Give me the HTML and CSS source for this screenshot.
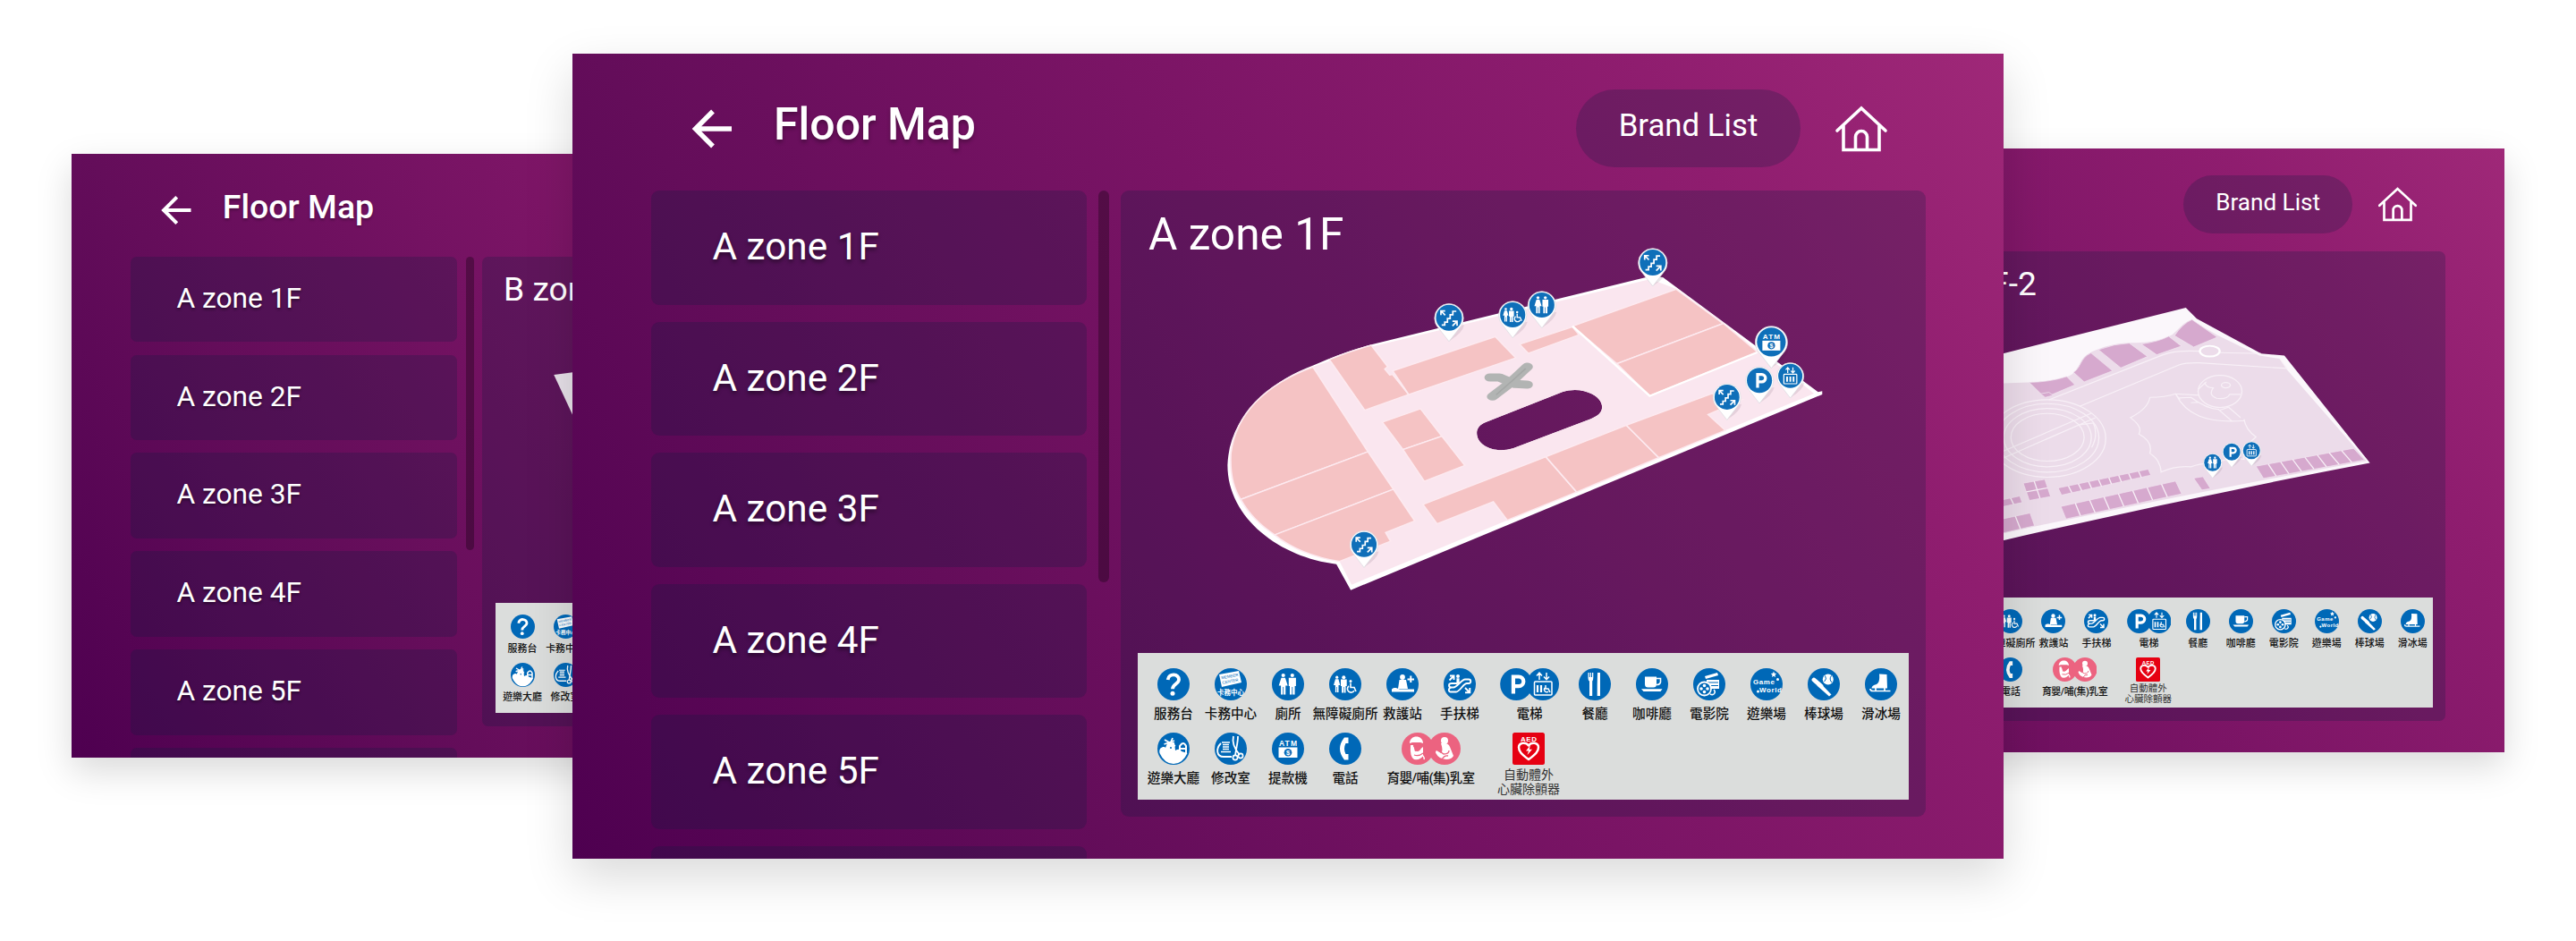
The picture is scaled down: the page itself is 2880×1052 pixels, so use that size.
FILE: index.html
```html
<!DOCTYPE html>
<html lang="zh-Hant">
<head>
	<meta charset="utf-8">
	<meta name="viewport" content="width=device-width,initial-scale=1">
	<title>Floor Map</title>
	<link rel="stylesheet" href="styles.css">
</head>
<body>
	<!-- shared icons, drawn around 0,0 with r=18 -->
	<svg class="defs" width="0" height="0">
		<defs>
			<symbol id="back" viewBox="0 0 48 48"><path d="M46 24H6M25 4.500L5.500 24L25 43.500" fill="none" stroke="#fff" stroke-width="5.400"/></symbol>
			<symbol id="home" viewBox="0 0 60 54"><path d="M3 29L30 4L57 29M10 23.500V50.500H50V23.500M23.500 50V36a6.500 6.500 0 0 1 13 0V50" fill="none" stroke="#fff" stroke-width="3.600" stroke-linecap="round"/></symbol>

			<g id="g-toilet" fill="#fff">
				<circle cx="-5.300" cy="-10" r="2.100"/><path d="M-7.500-7.300h4.400L-.3 1.500H-2.700V11.500H-4.900V3h-.8v8.500H-7.900V1.500H-10.300Z"/>
				<circle cx="4.800" cy="-10" r="2.100"/><path d="M.8-7.300H8.900V2H7.600V11.500H5.200V3H4.400v8.500H2V2H.8Z"/>
			</g>
			<g id="g-wheel" fill="#fff">
				<circle cx="-9.300" cy="-7.800" r="1.600"/><path d="M-11-5.700h3.400l1.900 6.600H-7.500V9h-1.500V3h-.6V9h-1.500V.900H-13Z"/>
				<circle cx="-1.700" cy="-7.800" r="2"/><path d="M-5-5.500H1.700V2H.5V9.500H-1.400V3h-.6V9.500H-3.900V2H-5Z"/>
				<circle cx="6" cy="-3.500" r="1.500"/><path d="M6-1.500V3.500h4l2 4.500M4 2A4 4 0 1 0 10 7" fill="none" stroke="#fff" stroke-width="1.600"/>
			</g>
			<g id="g-esc" fill="none" stroke="#fff" stroke-width="2">
				<path d="M-9.500 9.500H-5.500V5.500H-2V1H1.500V-4H5V-8.500H9.500"/><path d="M-5-3.500L-10-8.500M-10.500-3.500V-9h5.500M4.500 10.500L10 5M4.500 4.500H10.500V10.500"/>
			</g>
			<g id="g-p"><path d="M-4.600 10.500V-8.500H1.500a5.300 5.300 0 0 1 0 10.600H-4.600" fill="none" stroke="#fff" stroke-width="4.200"/></g>
			<g id="g-lift" fill="none" stroke="#fff" stroke-width="1.700">
				<rect x="-10" y="-2.500" width="20" height="14.500" rx="1"/><path d="M-4-4.500V-12.500M-7-9.500L-4-12.800L-1-9.500M4-13V-5M1-8L4-4.800L7-8"/>
				<path d="M-5 1V9M0 1V9M5 1V9" stroke-width="2.600"/>
			</g>
			<g id="g-atm">
				<text x="0" y="-3.500" class="ico-text" font-size="8.500" textLength="20">ATM</text>
				<rect x="-10.500" y="-1.500" width="21" height="11.500" fill="#fff"/><circle cx="0" cy="4.200" r="4.300" fill="#0b6bb8"/><text x="0" y="7" class="ico-text" font-size="7.500">$</text>
			</g>

			<symbol id="i-ask" viewBox="-18 -18 36 36"><circle r="18" fill="#0068b7"/><path d="M-6.300-5C-5.500-13 6.500-12 6-4.800C5.700-.5-1-.4-1 5.200" fill="none" stroke="#fff" stroke-width="3.800"/><circle cx="-1" cy="10.200" r="2.500" fill="#fff"/></symbol>
			<symbol id="i-card" viewBox="-18 -18 36 36"><circle r="18" fill="#0068b7"/><path d="M-13-11L9-15L12-2L-10 3Z" fill="#fff"/><g fill="#0068b7" font-family="Liberation Sans" font-size="4.400" transform="rotate(-11)"><text x="-9" y="-7.500">MEMBER</text><text x="-9" y="-2">CENTER</text></g><text x="0" y="11.500" class="ico-text" font-size="7.500" textLength="30">卡務中心</text></symbol>
			<symbol id="i-toilet" viewBox="-18 -18 36 36"><circle r="18" fill="#0068b7"/><use href="#g-toilet"/></symbol>
			<symbol id="i-wheel" viewBox="-18 -18 36 36"><circle r="18" fill="#0068b7"/><use href="#g-wheel"/></symbol>
			<symbol id="i-aid" viewBox="-18 -18 36 36"><circle r="18" fill="#0068b7"/><circle cx="0" cy="-8" r="2.900" fill="#fff"/><path d="M-3.500-5H4L6 5H-5ZM-12 5.500C-9 3-7 4-3 5.500H13V8.500H-12Z" fill="#fff"/><path d="M5.500-5.500H13M9.300-9.500V-2" stroke="#fff" stroke-width="2"/></symbol>
			<symbol id="i-esc" viewBox="-18 -18 36 36"><circle r="18" fill="#0068b7"/><g fill="none" stroke="#fff" stroke-width="1.900"><path d="M-3-1H-9C-13-1-13 3.500-9 3.500H-7C-3 3.500 2-5.500 6-5.500H10C13-5.500 13-1 10-1H8C4-1 0 8.500-4 8.500H-10C-13 8.500-13 4-9 3.500"/><path d="M-11.500-4.500L-6.500-9.500M-11-9.500H-6.500V-5M6 4L11 9M11.300 4V9.300H6"/></g><circle cx="-2" cy="-9" r="2" fill="#fff"/><path d="M-3.600-6.800H-.4V-1L-3.600 0Z" fill="#fff"/></symbol>
			<symbol id="i-lift" viewBox="-33 -18 66 36"><circle cx="-14.800" r="18" fill="#0068b7"/><circle cx="15" r="18" fill="#0068b7"/><use href="#g-p" x="-13.500"/><g transform="translate(15 0)" fill="none" stroke="#fff" stroke-width="1.500"><rect x="-9.500" y="-3" width="19.500" height="15" rx="1"/><path d="M-4-5V-12.500M-7-9.500L-4-12.800L-1-9.500M4-13V-5.500M1-8.500L4-5.300L7-8.500"/><path d="M-6 1V9M-2 1V9" stroke-width="2.200"/><path d="M3 1V5H6L8 9M2.300 4A2.700 2.700 0 1 0 6 8"/></g></symbol>
			<symbol id="i-fork" viewBox="-18 -18 36 36"><circle r="18" fill="#0068b7"/><path d="M-7.500-13V-7.500Q-7.500-4-6-3.500V13h3.200V-3.500Q-1.700-4-1.700-7.500V-13H-3V-8H-4V-13H-5.200V-8H-6.200V-13ZM3-13H6V13H2.700V1Z" fill="#fff"/></symbol>
			<symbol id="i-cup" viewBox="-18 -18 36 36"><circle r="18" fill="#0068b7"/><path d="M-8-8.500H5V0Q5 3.500 1.500 3.500H-4.500Q-8 3.500-8 0ZM-12 5.300H11.500L9.500 8H-9.500Z" fill="#fff"/><path d="M5-6.500H9.500V-2.500Q9 .500 5 .500" fill="none" stroke="#fff" stroke-width="1.600"/></symbol>
			<symbol id="i-film" viewBox="-18 -18 36 36"><circle r="18" fill="#0068b7"/><path d="M-5-9L9-13L10-10L-4-6ZM-3-5H11V5H-3Z" fill="#fff"/><path d="M-2-2H10M-2 1.500H10M5 6C8 8 4 12 1 9" stroke="#0068b7" fill="none"/><circle cx="-5.500" cy="5" r="7.500" fill="#0068b7" stroke="#fff" stroke-width="1.800"/><g fill="#fff"><circle cx="-5.500" cy="1.500" r="1.800"/><circle cx="-9" cy="5" r="1.800"/><circle cx="-2" cy="5" r="1.800"/><circle cx="-5.500" cy="8.500" r="1.800"/></g><path d="M1 11C5 13 8 9 5 6" stroke="#fff" fill="none" stroke-width="1.500"/></symbol>
			<symbol id="i-game" viewBox="-18 -18 36 36"><circle r="18" fill="#0068b7"/><text x="-3" y="-.5" class="ico-text" font-size="8" textLength="24">Game</text><text x="4.500" y="8.800" class="ico-text" font-size="8" textLength="25">World</text><path d="M8-14.500L8.900-12.300L11.200-12L9.500-10.400L10-8L8-9.200L6-8L6.500-10.400L4.800-12L7.100-12.300Z" fill="#fff"/><circle cx="12.500" cy="-5.500" r="1.500" fill="#fff"/><circle cx="-9.500" cy="8" r="1.500" fill="#fff"/></symbol>
			<symbol id="i-ball" viewBox="-18 -18 36 36"><circle r="18" fill="#0068b7"/><path d="M-11-5L-3 2" stroke="#fff" stroke-width="4.800" stroke-linecap="round"/><path d="M-5-2.500L8.500 11.500L6 13.500L-7.500 1.500Z" fill="#fff"/><circle cx="4.800" cy="-5.500" r="6" fill="#fff"/><path d="M1.500-9.500Q4-6 .500-3M8.500-9.500Q5.500-6 9-2" stroke="#0068b7" fill="none"/></symbol>
			<symbol id="i-skate" viewBox="-18 -18 36 36"><circle r="18" fill="#0068b7"/><path d="M-2-11.500L6.500-11L7 4.500H-10.500Q-10.500 1-5 0Q-1-2-2-11.500Z" fill="#fff"/><path d="M-12 5Q-12 7.500-9 7.500H10.500M-6 4V7M4 4V7" fill="none" stroke="#fff" stroke-width="1.700"/></symbol>
			<symbol id="i-hall" viewBox="-18 -18 36 36"><circle r="18" fill="#0068b7"/><path d="M-15.500 5C-17-2-10-3-9-1L-7-6L-4-8L1-7L2 2Q7-1 9 3L15.500 5Q10 17 0 17T-15.500 5Z" fill="#fff"/><path d="M-10-10L2-3M-1-12L-6 0M-10.500-5L1-9" stroke="#fff" stroke-width="1.800"/><path d="M7 4V-3Q11-9 14-3V5M7 0H14" fill="none" stroke="#fff" stroke-width="2"/><circle cx="-3" cy="-1" r="1" fill="#0068b7"/></symbol>
			<symbol id="i-sew" viewBox="-18 -18 36 36"><circle r="18" fill="#0068b7"/><path d="M-10-7H-1M-9-4.500H-2M-9-2H-2M-9 .500H-2M-11 3.500H0" stroke="#fff" stroke-width="1.600"/><path d="M-11-6C-17 0-16 9-8 9H1M3-14C1-6 4 0 10 7M8-14C8-6 6-1 5 8" fill="none" stroke="#fff" stroke-width="1.800"/><circle cx="5" cy="10" r="2.600" fill="none" stroke="#fff" stroke-width="1.700"/><circle cx="11" cy="8" r="2.600" fill="none" stroke="#fff" stroke-width="1.700"/></symbol>
			<symbol id="i-atm" viewBox="-18 -18 36 36"><circle r="18" fill="#0068b7"/><use href="#g-atm"/></symbol>
			<symbol id="i-tel" viewBox="-18 -18 36 36"><circle r="18" fill="#0068b7"/><path d="M-1-12.500H3.500V-6H.500Q-2.500 0 .500 6H3.500V12.500H-1Q-11 0-1-12.500Z" fill="#fff"/></symbol>
			<symbol id="i-baby" viewBox="-33 -18 66 36"><circle cx="-15" r="18" fill="#ec6380"/><circle cx="15" r="18" fill="#ec6380"/><path d="M-24-6C-24-16-9-16-9-6L-12-7H-21ZM-23-4H-20L-18 3L-14 2L-9-2L-9 8Q-12 13-19 12Q-24 9-23-4Z" fill="#fff"/><path d="M-20-3H-11M-18 1Q-15 4-12 0M-19 7Q-14 9-9 5" fill="none" stroke="#ec6380" stroke-width="1.300"/><path d="M-10 7Q-7 10-8 12" fill="none" stroke="#fff" stroke-width="1.500"/><circle cx="15" cy="-9" r="4" fill="#fff"/><path d="M11-6Q19-7 21-2L25 8Q23 12 17 12Q8 11 6 6Q4 4 6 2L11 5Q14 3 11-6Z" fill="#fff"/><path d="M7 1L14 6Q20 6 20 2M12 12Q15 7 19 8" fill="none" stroke="#ec6380" stroke-width="1.300"/></symbol>
			<symbol id="i-aed" viewBox="-18 -18 36 36"><rect x="-18" y="-18" width="36" height="36" rx="2.500" fill="#e60012"/><text x="0" y="-8" class="ico-text" font-size="8" textLength="18">AED</text><path d="M0 12C-8 6-11 3-11-1.500C-11-7-3-8 0-3.500C3-8 11-7 11-1.500C11 3 8 6 0 12Z" fill="none" stroke="#fff" stroke-width="2.500" stroke-linejoin="round"/><path d="M2-4L-3 2.500H0L-1.500 7L4 .800H.800Z" fill="#fff"/></symbol>

			<!-- map pin, the tip is below the circle -->
			<g id="pin"><path d="M1 25.500L-4 18L11 9L17 8Q15 17 1 25.500Z" fill="#301030" opacity=".1"/><path d="M0 26.500L-11.500 11.800A16.200 16.200 0 1 1 11.500 11.800Z" fill="#fff" stroke="#d9d9de" stroke-width=".7"/><circle r="14.500" fill="#0f6fb9"/></g>
			<g id="pin-esc"><use href="#pin"/><use href="#g-esc" transform="scale(.86)"/></g>
			<g id="pin-wheel"><use href="#pin"/><use href="#g-wheel" transform="scale(.86)"/></g>
			<g id="pin-toilet"><use href="#pin"/><use href="#g-toilet" transform="scale(.84)"/></g>
			<g id="pin-p"><use href="#pin"/><use href="#g-p" transform="translate(1.500 0) scale(.8)"/></g>
			<g id="pin-lift"><use href="#pin"/><use href="#g-lift" transform="scale(.78)"/></g>
			<g id="pin-atm"><use href="#pin"/><use href="#g-atm" transform="scale(.86)"/></g>

			<radialGradient id="edge"><stop offset="0" stop-color="#fff"/><stop offset="1" stop-color="#e6e0e8"/></radialGradient>
		</defs>
	</svg>

	<div class="stage">
		<div class="screen left">
			<div class="header">
				<svg class="back"><use href="#back"/></svg>
				<h1>Floor Map</h1>
			</div>
			<div class="main">
				<ul class="list">
					<li>A zone 1F</li><li>A zone 2F</li><li>A zone 3F</li><li>A zone 4F</li><li>A zone 5F</li><li></li>
				</ul>
				<div class="bar"></div>
				<div class="panel">
					<h2>B zone 1F</h2>
					<svg class="map" viewBox="0 0 900 453">
						<path d="M107 112L260 92L260 440Z" fill="url(#edge)"/>
					</svg>
					<div class="legend"></div>
				</div>
			</div>
		</div>

		<div class="screen right">
			<div class="header">
				<span class="brand">Brand List</span>
				<svg class="home"><use href="#home"/></svg>
			</div>
			<div class="main">
				<div class="panel">
					<h2>B zone 1F-2</h2>
					<svg class="map" viewBox="0 0 900 453">
						<svg width="900" height="453" viewBox="-445.500 566 1764 1020" preserveAspectRatio="none" class="floor-b">
							<path class="wall" d="M560 611L592 648L780 765L848 772L1020 1020L1098 1132Q560 1250 26 1392L-300 1480V860L26 765Z"/>
							<path class="ground" d="M-200 865H26L100 862C180 858 225 845 235 825C258 800 245 775 305 750C390 710 440 750 520 702C545 675 555 660 575 652L655 705L775 772L835 782L855 818L1088 1125Q560 1235 26 1368L-200 1420Z"/>
							<path class="shop" d="M103 862Q165 860 212 842L236 870L148 913ZM232 828C255 812 250 780 283 763L346 823L263 860ZM305 752Q350 732 395 730L448 775L370 813ZM430 733Q480 725 510 707L547 740L475 769ZM527 705Q550 665 578 651L652 710L583 743Z"/>
							<path class="shop" d="M187 1216L450 1153L458 1173L197 1240ZM195 1278L530 1193L548 1236L210 1320ZM583 1183L610 1178L632 1218L607 1223ZM765 1143L1050 1083L1082 1122L787 1184ZM85 1200L148 1187L165 1245L103 1258ZM0 1262L75 1243L82 1265L0 1285ZM0 1326L105 1300L118 1343L0 1374ZM135 900L160 895L172 905L150 912Z"/>
							<g class="line">
								<path d="M160 920L480 775C520 755 560 755 600 757M660 762L780 765M250 942L540 803Q560 795 600 796L855 815L835 782"/>
								<ellipse cx="156" cy="1050" rx="170" ry="130"/><ellipse cx="156" cy="1048" rx="150" ry="115"/><ellipse cx="156" cy="1047" rx="128" ry="98"/><ellipse cx="156" cy="1046" rx="107" ry="80"/>
								<path d="M26 1093L284 965M26 1116L296 980M250 1004L290 998Q305 1040 285 1080"/>
								<ellipse cx="660" cy="892" rx="64" ry="54"/><ellipse cx="677" cy="871" rx="13" ry="9"/>
								<path d="M596 885L620 860M615 862Q620 880 640 880Q625 905 650 915Q680 920 688 902H720M530 900C560 970 620 1000 730 990M530 900L598 905M540 914L575 912Q620 950 655 952L695 992M575 930L598 928M660 955L685 945L720 980M455 912Q500 912 530 900L543 920M455 912Q450 950 398 980Q435 1010 423 1035Q465 1060 455 1100Q485 1120 488 1163Q530 1140 575 1145Q610 1130 640 1135Q690 1110 730 1120Q725 1080 765 1045Q735 1020 730 985"/>
								<path d="M217 1209L227 1232M246 1202L256 1225M276 1195L285 1218M305 1188L314 1211M335 1181L343 1203M364 1174L372 1196M393 1167L401 1188M422 1160L430 1181M237 1267L252 1309M279 1257L295 1299M321 1246L337 1288M363 1235L379 1278M405 1225L421 1267M447 1214L463 1257M489 1203L506 1246M801 1136L824 1176M837 1128L861 1168M872 1120L898 1160M908 1113L934 1152M944 1105L971 1145M979 1098L1008 1137M1015 1090L1045 1130M117 1193L134 1251M94 1229L156 1216M48 1250L57 1271M62 1311L77 1354"/>
							</g>
							<ellipse cx="630" cy="757" rx="29" ry="18" fill="#ecdcea" stroke="#fff" stroke-width="6"/>
						</svg>
						<use href="#pin-toilet" transform="translate(553 251) scale(.87)"/>
						<use href="#pin-p" transform="translate(581.500 235) scale(.87)"/>
						<use href="#pin-lift" transform="translate(611 233) scale(.87)"/>
					</svg>
					<div class="legend"></div>
				</div>
			</div>
		</div>

		<div class="screen center">
			<div class="header">
				<svg class="back"><use href="#back"/></svg>
				<h1>Floor Map</h1>
				<span class="brand">Brand List</span>
				<svg class="home"><use href="#home"/></svg>
			</div>
			<div class="main">
				<ul class="list">
					<li>A zone 1F</li><li>A zone 2F</li><li>A zone 3F</li><li>A zone 4F</li><li>A zone 5F</li><li></li>
				</ul>
				<div class="bar"></div>
				<div class="panel">
					<h2>A zone 1F</h2>
					<svg class="map" viewBox="0 0 900 453">
						<svg width="900" height="453" viewBox="-190 51 1960 1359" preserveAspectRatio="none" class="floor-a">
							<path class="wall" fill-rule="evenodd" d="M1100 146L1130 150L1508 535L1518 532V543L370 1199L335 1112C200 1090 70 960 70 780C74 610 180 495 280 445Q350 402 420 376ZM700 635L885 535C930 513 982 545 982 585C982 605 970 615 955 625L765 724C720 742 677 715 677 672C677 655 685 643 700 635Z"/>
							<path class="ground" fill-rule="evenodd" d="M424 382L1100 156L1164 190L1360 400L1425 458L1498 540L372 1181L343 1103L185 1016L102 895L78 740L278 450ZM700 635L885 535C930 513 982 545 982 585C982 605 970 615 955 625L765 724C720 742 677 715 677 672C677 655 685 643 700 635Z"/>
							<g class="shop">
								<path d="M278 451L412 735L102 895C80 850 76 790 78 740C90 610 160 510 278 451Z"/>
								<path d="M412 735L474 861L185 1014Q130 965 102 895Z"/>
								<path d="M474 861L526 967L455 1006L467 1035L343 1103C280 1090 220 1055 185 1014Z"/>
								<path d="M318 426Q365 398 420 378L460 450L453 458L465 478L472 476L511 543L404 596Z"/>
								<path d="M472 464L722 349L772 420L511 543Z"/>
								<path d="M781 375L910 316L926 343L802 405Z"/>
								<path d="M910 314L1162 190L1277 305L1018 440Z"/>
								<path d="M1018 440L1277 305L1360 400L1098 548Z"/>
								<path d="M447 636L540 591L592 683L497 728Z"/>
								<path d="M497 728L592 683L648 781L549 834Z"/>
								<path d="M546 912L845 752L920 870L751 965L717 903L580 977Z"/>
								<path d="M845 752L1041 646L1120 755L920 870Z"/>
								<path d="M1041 646L1250 540L1325 560L1240 610L1282 663L1120 755Z"/>
							</g>
							<path class="thick" d="M910 314L1098 548L1360 402"/>
							<path class="cross" d="M709 486L732 486L770 508L800 510"/>
							<path class="cross" d="M715 550L755 508L800 450"/>
							<path class="shade" d="M724 544L764 496L796 456"/>
						</svg>
						<use href="#pin-esc" transform="translate(594.800 16.500)"/>
						<use href="#pin-esc" transform="translate(367 78.300)"/>
						<use href="#pin-wheel" transform="translate(438.200 75) scale(.97)"/>
						<use href="#pin-toilet" transform="translate(470.800 64) scale(.97)"/>
						<use href="#pin-atm" transform="translate(727.400 105.300) scale(1.110)"/>
						<use href="#pin-p" transform="translate(714.100 148.300) scale(.97)"/>
						<use href="#pin-lift" transform="translate(748.600 143.300) scale(.93)"/>
						<use href="#pin-esc" transform="translate(677.800 167) scale(.96)"/>
						<use href="#pin-esc" transform="translate(272 331.700) scale(.97)"/>
					</svg>
					<div class="legend"></div>
				</div>
			</div>
		</div>
	</div>

	<script>
	// icon, label, cell class
	var items=[
		['ask','服務台'],['card','卡務中心'],['toilet','廁所'],['wheel','無障礙廁所'],['aid','救護站'],['esc','手扶梯'],
		['lift','電梯','double'],['fork','餐廳'],['cup','咖啡廳'],['film','電影院'],['game','遊樂場'],['ball','棒球場'],['skate','滑冰場','last'],
		['hall','遊樂大廳'],['sew','修改室'],['atm','提款機'],['tel','電話'],['baby','育嬰/哺(集)乳室','double baby'],['aed','自動體外<br>心臟除顫器','aed']
	];
	var html='';
	for (var i = 0; i < items.length; i++) {
		html+='<div class="cell '+(items[i][2]||'')+'"><svg><use href="#i-'+items[i][0]+'"/></svg><p>'+items[i][1]+'</p></div>';
	};
	var legends=document.querySelectorAll('.legend');
	for (var j = 0; j < legends.length; j++) {
		legends[j].innerHTML=html;
	};
	</script>
</body>
</html>
```
FILE: styles.css
```css
*{margin:0;padding:0;box-sizing:border-box;}
body{background:#FFF;font-family:Roboto,"Noto Sans CJK TC",sans-serif;color:#FFF;}
.defs{position:absolute;}
.stage{position:relative;width:2880px;height:1052px;overflow:hidden;}

/* the three windows overlap each other */
.screen{position:absolute;width:1600px;height:899.5px;overflow:hidden;background:linear-gradient(57deg,#4e0050 0%,#640d5a 28%,#7a1465 54%,#8f1d6f 81%,#9f2878 100%);box-shadow:0 20px 50px rgba(0,0,0,.15);}
.center{left:640px;top:60px;}
.left,.right{zoom:.75;}
.left{left:106.67px;top:229.33px;}
.right{left:2133.33px;top:221.33px;}

.header{display:flex;align-items:center;height:153px;padding:14px 129px 0 132px;}
.header h1{padding-bottom:9px;font-size:50px;font-weight:500;line-height:60px;text-shadow:0 3px 4px rgba(0,0,0,.3);}
.back{width:48px;height:48px;margin-right:45px;}
.brand{width:251px;height:87px;margin-left:auto;padding-bottom:6px;border-radius:44px;background:rgba(12,29,62,.24);font-size:34.8px;line-height:81px;text-align:center;}
.home{width:60px;height:54px;margin-left:38px;}

.main{display:flex;height:700px;padding:0 87.5px;}
.list{display:flex;flex-direction:column;gap:19px;width:487.5px;list-style:none;}
.list li{flex:none;height:127.5px;padding-left:69px;border-radius:9px;background:rgba(12,29,62,.24);font-size:42.3px;line-height:125px;text-shadow:0 3px 4px rgba(0,0,0,.45);}
.bar{width:12.5px;height:438px;margin-left:12.5px;border-radius:7px;background:rgba(0,0,0,.29);}
.panel{display:flex;flex-direction:column;width:900px;height:700px;margin-left:auto;border-radius:9px;background:rgba(12,29,62,.24);}
.panel h2{height:64px;padding-left:31.5px;font-size:49.6px;font-weight:400;line-height:98px;}
.map{display:block;width:900px;height:453px;}

.wall{fill:#FFF;}
.floor-a .ground{fill:#fae6ef;}
.floor-a .shop{fill:#f5c3c4;stroke:#fdeaf0;stroke-width:4;}
.thick{fill:none;stroke:#FFF;stroke-width:6;}
.cross{fill:none;stroke:#b2b4b3;stroke-width:27;stroke-linecap:round;stroke-linejoin:round;}
.shade{fill:none;stroke:#a5a7a6;stroke-width:4;}
.floor-b .wall{fill:#fbf7fb;}
.floor-b .ground{fill:#ecdcea;}
.floor-b .shop{fill:#d6a9ce;stroke:#f3e6f1;stroke-width:2;}
.floor-b .line{fill:none;stroke:#f8f0f7;stroke-width:3.5;}

.legend{display:flex;flex-wrap:wrap;align-content:flex-start;width:862px;height:164px;margin-left:19.5px;padding:17px 0 0 8px;background:#dbdddc;}
.cell{display:flex;flex-direction:column;align-items:center;width:64px;height:72px;color:#111;}
.cell svg{flex:none;width:36px;height:36px;}
.cell p{margin-top:5px;font-size:14.6px;font-weight:500;line-height:20px;white-space:nowrap;}
.last{margin-right:-8px;}
.double{width:87px;padding-left:5px;}
.double svg{width:66px;}
.baby{width:127px;padding-left:0;}
.baby p{letter-spacing:-.6px;}
.aed{width:87px;padding-left:5px;}
.aed p{margin-top:3px;font-size:14px;font-weight:400;line-height:16px;text-align:center;color:#333;}

.ico-text{fill:#FFF;font-family:"Liberation Sans","Noto Sans CJK TC",sans-serif;font-weight:700;text-anchor:middle;}
```
